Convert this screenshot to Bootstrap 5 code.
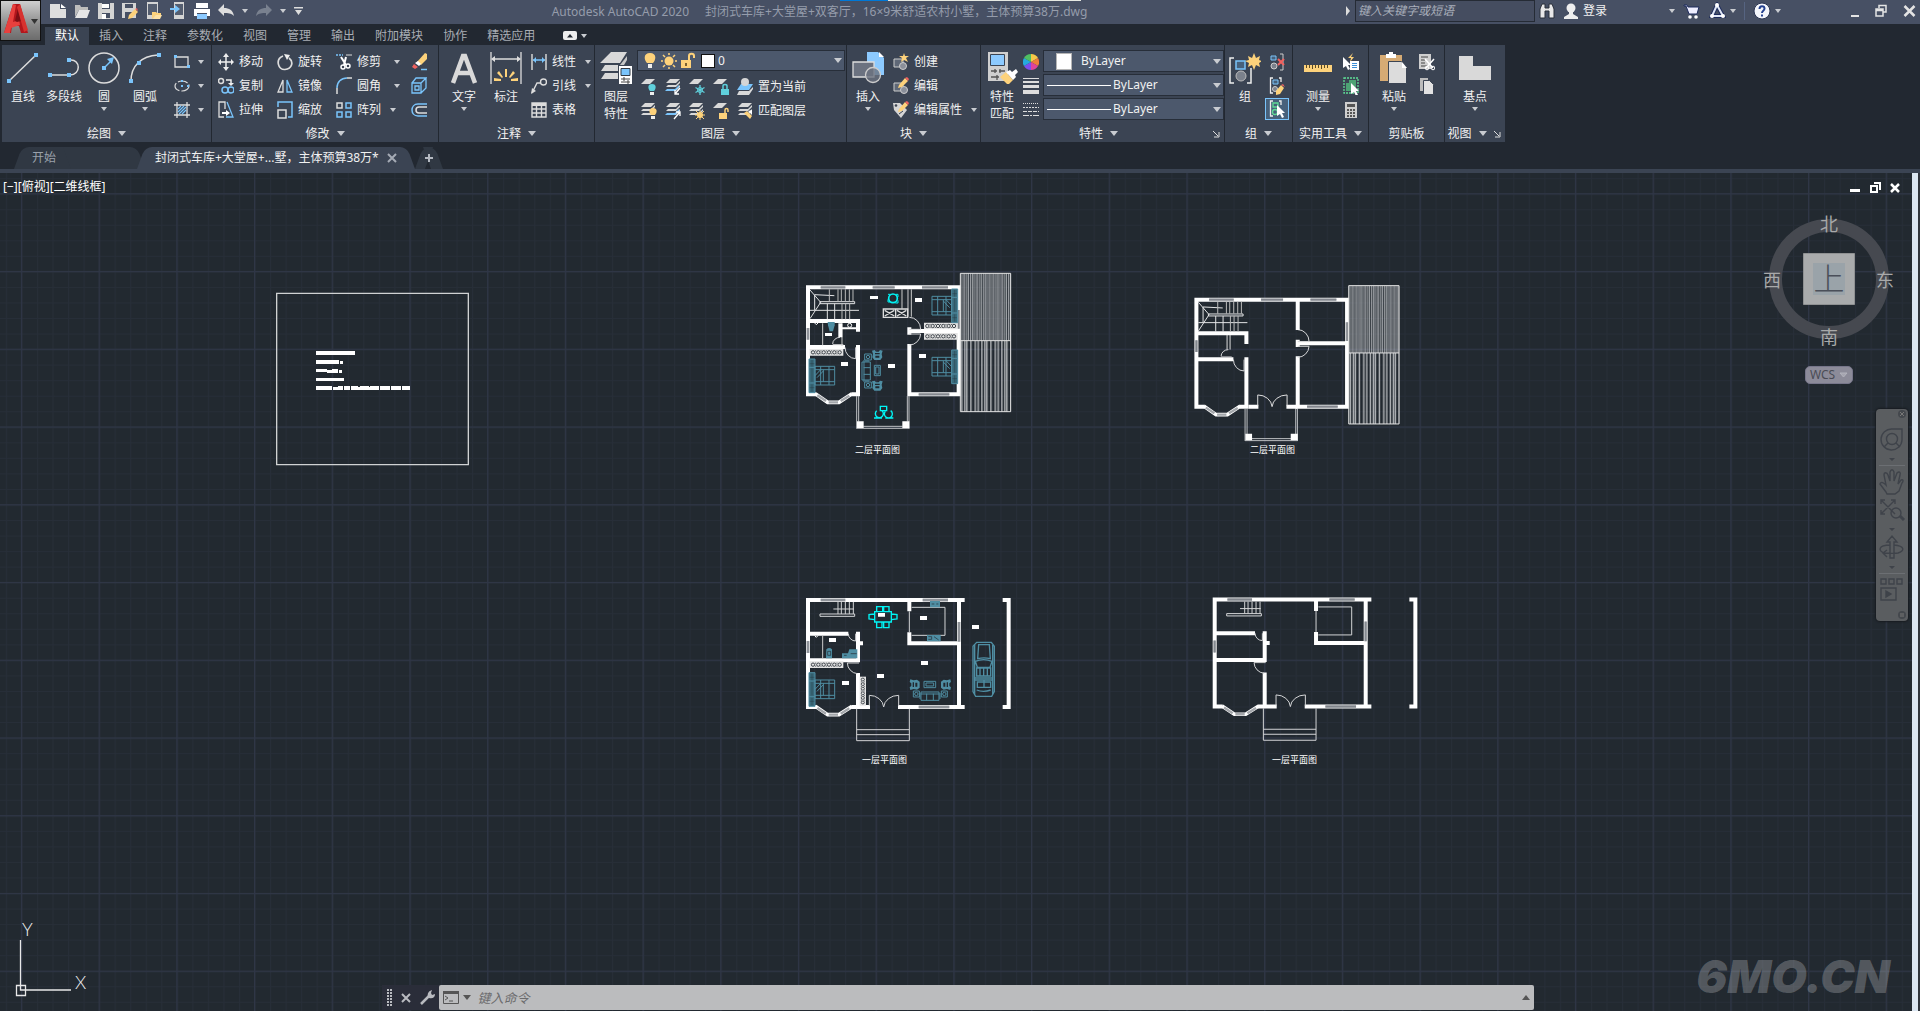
<!DOCTYPE html>
<html lang="zh-CN" data-bs-theme="dark">
<head>
<meta charset="utf-8">
<meta name="viewport" content="width=device-width, initial-scale=1">
<title>Autodesk AutoCAD 2020</title>
<link href="https://cdn.jsdelivr.net/npm/bootstrap@5.3.0/dist/css/bootstrap.min.css" rel="stylesheet">
<script src="https://cdn.jsdelivr.net/npm/bootstrap@5.3.0/dist/js/bootstrap.bundle.min.js"></script>
<style>
:root{--dark:#222831;--panel:#3b4453;--title:#475064;--field:#4c586c;--blue:#7ac4fb;--gold:#fdd27b}
body{font:12px/16px "Noto Sans","Noto Sans CJK SC",sans-serif;background:var(--dark);color:#f1f1f1}
button,input,select{font:inherit;color:inherit}
.flat{background:none;border:0;padding:0;display:flex;align-items:center;color:inherit}
svg{display:block;flex:none}
.i16{width:16px;height:18px}.i32{width:32px;height:32px}
.tri{width:0;height:0;border:3px solid transparent;border-top:4px solid #c9ccd1;border-bottom:0;flex:none}
.tri-l{border-width:4px;border-top-width:5px;border-bottom:0}
/* title bar */
.titlebar{height:24px;background:var(--title)}
.applogo{width:41px;height:41px;left:0;top:0;z-index:3;background:linear-gradient(#cfcfcf,#8b8b8b 60%,#6c6c6c);border:1px solid #111}
.qat{width:296px;padding:0 0 2px 50px;gap:8px}
.doc-title{color:#959cab}
.snap-a{left:840px;top:0;width:48px;height:1px;background:#0078d7}
.snap-b{left:888px;top:0;width:193px;height:1px;background:#e6e9e3}
.search{width:180px;height:22px;border:1px solid #252b35;background:#454d60;padding:0 0 2px 2px;font-style:italic;border-radius:0}
.search::placeholder{color:#a9afbb;opacity:1}
.info{width:577px;height:22px}
.account{width:92px;justify-content:space-between}
.tbsep{width:1px;height:18px;background:#566481}
/* ribbon */
.tabs{height:21px;padding:3px 0 0 45px}
.tabs button{padding:0 10px;height:18px;color:#a9adb4}
.tabs .on{background:var(--panel);color:#fff}
.ribbon{height:97px;gap:1px;padding-left:2px}
.pan{background:var(--panel);display:flex;flex-direction:column}
.pan-in{display:flex;padding-top:5px;height:78px}
.pan-ft{display:flex;height:19px;align-items:center;justify-content:center;gap:7px;padding-top:2px;position:relative}
.launch{position:absolute;right:4px;top:7px}
.big{flex-direction:column;width:42px;padding-top:2px;text-align:center;flex:none}
.big span{margin-top:4px;line-height:17px}
.big .tri{margin-top:2px}
.cmd{height:24px;gap:5px;white-space:nowrap}
.stack{display:flex;flex-direction:column;flex:none}
.w42{width:42px}.w40{width:40px}.w44{width:44px}.w59{width:59px}.w75{width:75px}
.w-draw{width:209px}.w-mod{width:226px}.w-ann{width:155px}.w-lay{width:251px}.w-blk{width:133px}
.w-prop{width:243px}.w-grp{width:67px}.w-util{width:75px}.w-clip{width:75px}.w-view{width:60px}
.in-mod{padding-left:6px}
.combo{height:22px;background:var(--field);border:1px solid #272e39;display:flex;align-items:center;position:relative;padding-right:2px}
.combo select{appearance:none;background:none;border:0;padding:0 0 0 5px;flex:1;min-width:0;outline:0}
.combo option{background:#3b4453}
.combo-lay{width:208px;padding-left:4px;gap:3px}
.combo-prop{width:181px;margin-bottom:2px}
.sw{background:#fff;border:1px solid #111;width:14px;height:14px;margin-left:2px}
.swl{background:#fff;border:1px solid #b5b5b5;width:16px;height:17px;margin:0 4px 0 12px}
.ln{width:64px;height:1px;background:#fff;margin:0 2px 0 3px}
.pick{width:24px;height:22px;border:1px solid var(--blue);background:#47617b;justify-content:center}
/* file tabs */
.files{height:27px;padding:5px 0 0 18px}
.ftab{position:relative;height:22px;display:flex;align-items:center;isolation:isolate;color:#9aa1ab;white-space:nowrap}
.ftab::before,.ftab::after{content:"";position:absolute;z-index:-1;top:0;bottom:0;background:#303843}
.ftab::before{left:0;right:50%;transform:skewX(-20deg);border-radius:7px 0 0 0}
.ftab::after{right:0;left:40%;transform:skewX(20deg);border-radius:0 7px 0 0}
.ftab.cur::before,.ftab.cur::after{background:var(--panel)}
.ftab.cur{color:#f1f1f1;width:270px;padding-left:14px}
.f-start{width:123px;padding-left:14px}
.f-add{width:20px;justify-content:center;margin-left:8px}
.strip{height:4px;background:var(--panel)}
/* canvas */
.stage{background:#222930;border-right:6px solid #dbe6f1;overflow:hidden}
.edge{width:2px;background:#30353c}
.vp-label{left:3px;top:6px;color:#fff}
.mdi{right:12px;top:9px;gap:9px}
.cube{right:17px;top:34px}
.wcs{right:59px;top:193px;width:48px;height:18px;background:#8c8b99;border:1px solid #77768a;border-radius:5px;color:#4a4b55;padding:0 4px;justify-content:space-between}
.navbar-v{right:4px;top:236px;width:32px;height:212px;background:#5a5d60;border-radius:4px;box-shadow:0 0 2px 1px #171b20}
.cmdline{left:20%;right:378px;bottom:1px;height:25px;background:#2a2d39}
.cmdtools{width:57px;gap:9px;padding-left:5px}
.cmdbox{background:#bbbcbe;border-radius:2px;color:#4b4b4b;padding:0 4px}
.cmdbox input{background:none;border:0;outline:0;font-style:italic;font-size:13px}
.cmdbox input::placeholder{color:#6b6b6d;opacity:1}
.wm{right:22px;bottom:13px;font:italic 900 46px/44px Inter,sans-serif;color:rgba(255,255,255,.23)}
.cad{position:absolute;inset:0;width:100%;height:100%}
.cad text{font-size:9px;fill:#fff;font-family:"Noto Sans CJK SC",sans-serif}
.ucs text{font:300 18px Lato,sans-serif;fill:#f0f0f0}
.cube text{font-size:18px;fill:#a8a9aa;font-family:"Noto Sans CJK SC",sans-serif;text-anchor:middle}
.cube .top-t{font-size:31px;font-weight:300;fill:#4b4f59}
</style>
</head>
<body class="vh-100 d-flex flex-column overflow-hidden">

<svg width="0" height="0" class="position-absolute" aria-hidden="true"><defs>
<g id="sheets"><path fill="#d9d9d9" d="M5 1h10l-4 4H1zM3 7h8l4-4v2l-4 4H1zM3 11h8l4-4v2l-4 4H1z"/></g>
<g id="sheet1"><path fill="#d9d9d9" d="M5 2h9l-5 5H0z"/></g>
<g id="bracket" fill="none" stroke="#eee" stroke-width="1.3"><path d="M4 1H1.500v15H4M10 1h2v4"/></g>
<g id="cur"><path fill="#fff" d="M0 0v11l3-2 2 4 2-1-2-4h3z"/></g>
<!-- furniture -->
<g id="bed" fill="none" stroke="#4f8ea3" stroke-width="3"><path fill="#39697a" d="M0 0h18v101H0zM0 25h18M0 72h18"/><path stroke="#222930" stroke-width="1" d="M2 14h14M9 3v20M2 86h14M9 76v22M9 28v40"/><path d="M18 22h59v56H18zM18 32h59M18 68h59M35 22v56M60 22v56M43 32v36M18 50l17-18M24 56l19-20"/></g>
<g id="ward"><path fill="#e4e4e4" d="M0 0h101v20H0z"/><path fill="none" stroke="#222930" stroke-width="2.500" d="M5 10a5 5 0 1 0 10 0a5 5 0 1 0-10 0M21 10a5 5 0 1 0 10 0a5 5 0 1 0-10 0M37 10a5 5 0 1 0 10 0a5 5 0 1 0-10 0M53 10a5 5 0 1 0 10 0a5 5 0 1 0-10 0M69 10a5 5 0 1 0 10 0a5 5 0 1 0-10 0M85 10a5 5 0 1 0 10 0a5 5 0 1 0-10 0M18 4v3M34 4v3M50 4v3M66 4v3M82 4v3M18 13v3M34 13v3M50 13v3M66 13v3M82 13v3"/></g>
<g id="arm" fill="#4f8ea3"><path d="M0 2l8-2 4 5h8l4-5 8 2-3 10 2 10-6 8H7l-6-8 2-10z"/><path fill="#222930" d="M9 9h14v4H9zM10 17h12v6H10z"/></g>
<g id="sofa" fill="none" stroke="#4f8ea3" stroke-width="3"><path d="M3 0h54v25H3zM0 4v18M60 4v18M20 0v20M40 0v20M3 19h54"/></g>
<!-- second-floor walls -->
<g id="f2" fill="none">
 <g stroke="#fff" stroke-width="12" ><path d="M78 82H542M84 76V409M536 76V409M78 403H108M214 403H240M382 403H542M84 183H240M234 177V215M234 255V409M84 261H195M388 252V409M382 213H536M388 202V224"/><path d="M106 401L143 427H177L216 401" stroke-width="11"/></g>
 <g stroke="#a3a6aa" stroke-width="9"><path d="M122 82H196M278 82H344M426 82H504M536 150V206M84 204V239M416 403H508"/><path stroke-width="7" d="M112 406L138 423M182 423L208 407M146 427H174"/></g>
 <g stroke="#6b7078" stroke-width="2"><path d="M122 82H196M278 82H344M426 82H504M536 150V206M84 204V239M416 403H508"/></g>
 <g stroke="#bfc1c4" stroke-width="3"><path d="M230 408V506M236 408V485M387 408V506M382 408V485M230 505H388M250 499H368"/></g>
 <path fill="#fff" d="M231 484h20v20h-20zM367 484h21v20h-21z"/>
 <g stroke="#d4d5d7" stroke-width="3"><path d="M388 172A34 36 0 0 1 422 208H388M388 255A34 35 0 0 0 422 222H388M195 262A32 34 0 0 0 227 296V262M158 252A22 20 0 0 1 180 232M158 254H190"/></g>
 <g stroke="#e3e4e5" stroke-width="3"><path d="M90 90L122 127L90 176M104 104L163 107M104 104V150M90 151H237M120 125H224V131H120zM142 131V178M164 131V178"/><path d="M174 88V124M184 88V124M196 88V124M208 88V124M219 88V124M148 88V124M186 131V178M197 131V178M209 131V178" stroke="#bbb"/></g>
 <path fill="url(#h1)" d="M541 40H692V242H541z"/><path fill="url(#h2)" d="M541 242H692V455H541z"/>
 <path stroke="#e3e3e3" stroke-width="3" d="M541 40H692V455H541zM541 242H692"/>
</g>
<pattern id="h1" width="38" height="10" patternUnits="userSpaceOnUse" x="541"><path stroke="#dfe0e2" stroke-width="2" d="M3 0V10M9 0V10M14 0V10M20 0V10M25 0V10M31 0V10M36 0V10"/></pattern>
<pattern id="h2" width="60" height="10" patternUnits="userSpaceOnUse" x="541"><path stroke="#f0f1f2" stroke-width="3" d="M5 0V10M14 0V10M20 0V10M32 0V10M45 0V10M54 0V10"/></pattern>
<!-- ground-floor walls -->
<g id="f1" fill="none">
 <g stroke="#fff" stroke-width="12"><path d="M78 60H554M84 54V387M537 54V387M78 381H108M214 381H270M354 381H554M388 60V94M388 157V196M382 190H537M84 161H205M234 155V247M234 190H249M84 241H240M234 279V387M668 60H692M686 54V387M668 381H692"/><path stroke-width="11" d="M106 379L143 404H177L216 379"/></g>
 <g stroke="#a3a6aa" stroke-width="9"><path d="M122 60H196M428 60H504M537 126V185M84 183V219M416 381H508"/><path stroke-width="7" d="M112 384L138 401M182 401L208 385M146 404H174"/></g>
 <g stroke="#6b7078" stroke-width="2"><path d="M122 60H196M428 60H504M537 126V185M84 183V219M416 381H508"/></g>
 <g stroke="#d4d5d7" stroke-width="3"><path d="M230 386V482H388V386M230 449H388M230 464H388M395 82H495V166H395M388 94V157"/><path d="M205 161A22 22 0 0 0 227 183V161M237 249H202A33 33 0 0 0 232 281M268 378V346A43 38 0 0 1 311 381A45 38 0 0 1 356 346V378"/><path d="M174 66V102M184 66V102M196 66V102M208 66V102M220 66V102M160 87H222M120 102H224V109H120z"/></g>
</g>
</defs></svg>

<header class="titlebar d-flex position-relative flex-shrink-0">
 <span class="snap-a position-absolute"></span><span class="snap-b position-absolute"></span>
 <button class="flat applogo position-absolute" aria-label="应用程序菜单"><svg width="39" height="39" viewBox="0 0 39 39"><path fill="#b3161c" d="M3 32L12 3h7l8 29h-7l-2-7h-7l-1 7z"/><path fill="#e8403d" d="M3 32L12 3l3 1-3 17 6-2 1 5-9 3-1 5z"/><path fill="#7d0f14" d="M17 7l3 13-4 1-2-1z"/><path fill="#d8322f" d="M19 3l8 26-4 2-7-25z"/><path fill="#333" d="M30 18h7l-3.500 5z"/></svg></button>
 <nav class="qat d-flex align-items-center flex-shrink-0" aria-label="快速访问">
  <button class="flat" aria-label="新建"><svg class="i16"><path fill="#dedede" d="M0 2h10v5h6v9H0z"/><path fill="#fff" d="M11 2l5 4h-5z"/></svg></button>
  <button class="flat" aria-label="打开"><svg class="i16"><path fill="#bdbdbd" d="M1 3h5l1 2h7v3H5l-4 7z"/><path fill="#e6e6e6" d="M5 8h11l-3 8H1z"/></svg></button>
  <button class="flat" aria-label="保存"><svg class="i16"><path fill="#d4d4d4" d="M0 1h16v16H0z"/><path fill="#475064" d="M4 1h8v6H4zM4 11h8v5H4z"/><path fill="#fff" d="M4 2h7v4H4zM4 12h4v5H4z"/></svg></button>
  <button class="flat" aria-label="另存为"><svg class="i16"><path fill="#d4d4d4" d="M0 1h14v15H0z"/><path fill="#475064" d="M3 2h8v4H3zM3 10h7v6H3z"/><path fill="#fdd27b" d="M7 13l6-6 3 3-6 6-4 1z"/><path fill="#f0625f" d="M13 7l2-1 1 3z"/></svg></button>
  <button class="flat" aria-label="从移动设备打开"><svg class="i16"><path fill="#d4d4d4" d="M1 0h11v17H1z"/><path fill="#555e70" d="M2 2h9v11H2z"/><path fill="#fdd27b" d="M6 10h4l1 1h4v2h-5l-4 4z"/><path fill="#ffe2a5" d="M10 13h6l-2 4H7z"/></svg></button>
  <button class="flat" aria-label="保存到移动设备"><svg class="i16"><path fill="#d4d4d4" d="M4 0h10v17H4z"/><path fill="#555e70" d="M5 2h8v11H5z"/><path fill="#7ac4fb" d="M0 6h5V3l5 4-5 4V8H0z"/></svg></button>
  <button class="flat" aria-label="打印"><svg class="i16"><path fill="#fff" d="M2 1h12v5H2zM0 7h16v7h-3v-3H3v3H0z"/><path fill="#8ccaff" d="M3 12h10v5H3z"/><path stroke="#475064" d="M0 6.500h16"/></svg></button>
  <button class="flat" aria-label="放弃"><svg class="i16"><path fill="#dedede" d="M6 2v4c5 0 9 2 10 8-3-3-6-3-10-3v3L0 8z"/></svg></button>
  <span class="tri"></span>
  <button class="flat" aria-label="重做"><svg class="i16"><path fill="#79818f" d="M10 2v4c-5 0-9 2-10 8 3-3 6-3 10-3v3l6-6z"/></svg></button>
  <span class="tri"></span>
  <button class="flat" aria-label="自定义"><svg width="9" height="10"><path fill="#ddd" d="M0 1h9v1.500H0zM1 4h7l-3.500 5z"/></svg></button>
 </nav>
 <div class="doc-title flex-grow-1 text-center text-nowrap align-self-center overflow-hidden"><span class="me-3">Autodesk AutoCAD 2020</span><span>封闭式车库+大堂屋+双客厅，16×9米舒适农村小墅，主体预算38万.dwg</span></div>
 <div class="info d-flex align-items-center flex-shrink-0">
  <svg width="12" height="10" aria-hidden="true"><path fill="#ddd" d="M3 0l4 5-4 5z"/></svg>
  <input class="search" type="text" placeholder="键入关键字或短语" aria-label="搜索">
  <button class="flat ms-1 me-2" aria-label="搜索"><svg width="16" height="18"><path fill="#e8e8e8" stroke="#2b303b" d="M1 16V7l2-5h3v4h4V2h3l2 5v9h-5V9H6v7z"/></svg></button>
  <button class="flat me-1" aria-label="账户"><svg width="16" height="18"><circle cx="8" cy="6" r="4.500" fill="#eee"/><path fill="#eee" d="M6 9h4v3l5 3v2H1v-2l5-3z"/></svg></button>
  <button class="flat account"><span>登录</span><span class="tri"></span></button>
  <button class="flat ms-2" aria-label="应用商店"><svg width="18" height="18"><path fill="#eef" stroke="#1d2b5c" d="M1 3h3l1 2h11l-2 7H6L3 4H1z"/><circle cx="7" cy="15" r="1.800" fill="#fff"/><circle cx="13" cy="15" r="1.800" fill="#fff"/></svg></button>
  <button class="flat ms-2" aria-label="Autodesk"><svg width="17" height="18"><path fill="none" stroke="#1d2b5c" stroke-width="4" d="M8 3L3 14h11z"/><path fill="none" stroke="#dfe6f5" stroke-width="2" d="M8 3L3 14h11z"/><circle cx="8" cy="3" r="2" fill="#fff"/><circle cx="3" cy="14" r="2" fill="#fff"/><circle cx="14" cy="14" r="2" fill="#fff"/></svg></button>
  <span class="tri ms-1 me-2"></span><span class="tbsep me-2"></span>
  <button class="flat" aria-label="帮助"><svg width="18" height="18"><circle cx="9" cy="9" r="8" fill="#f4f6fb" stroke="#2b3552"/><path fill="none" stroke="#24418f" stroke-width="2" d="M6.500 7c0-4 5-3.500 5-.5C11.500 9 9 8.500 9 11M9 12.500v2"/></svg></button>
  <span class="tri ms-1"></span>
  <div class="d-flex ms-auto gap-3 me-1 align-items-center" >
   <button class="flat" aria-label="最小化"><svg width="8" height="14"><path fill="#e4e4e4" d="M0 11h8v2H0z"/></svg></button>
   <button class="flat" aria-label="还原"><svg width="12" height="14"><path fill="none" stroke="#e4e4e4" stroke-width="1.500" d="M4 4V1.500h7V8H8M1 5h7v7H1zM1 6.500h7"/></svg></button>
   <button class="flat" aria-label="关闭"><svg width="13" height="14"><path stroke="#e4e4e4" stroke-width="2.500" d="M1.500 2l10 10M11.500 2l-10 10"/></svg></button>
  </div>
 </div>
</header>

<nav class="tabs d-flex flex-shrink-0" aria-label="功能区选项卡">
 <button class="flat on">默认</button><button class="flat">插入</button><button class="flat">注释</button><button class="flat">参数化</button><button class="flat">视图</button><button class="flat">管理</button><button class="flat">输出</button><button class="flat">附加模块</button><button class="flat">协作</button><button class="flat">精选应用</button>
 <button class="flat ms-2 gap-1" aria-label="最小化功能区"><svg width="14" height="10"><rect width="14" height="9" rx="2" fill="#eee"/><path fill="#222831" d="M4 6.500l3-3.500 3 3.500z"/></svg><span class="tri"></span></button>
</nav>

<section class="ribbon d-flex flex-shrink-0">
 <div class="pan w-draw">
  <div class="pan-in">
   <button class="flat big w42"><svg class="i32"><path stroke="#ddd" stroke-width="1.500" d="M2 29L29 3"/><path fill="#7ac4fb" d="M0 27h4v4H0zM27 1h4v4h-4z"/></svg><span>直线</span></button>
   <button class="flat big w40"><svg class="i32"><path fill="none" stroke="#ddd" stroke-width="1.500" d="M2 23h20c11 0 11-16 0-15"/><path fill="#7ac4fb" d="M0 21h4v4H0zM19 21h4v4h-4zM19 6h4v4h-4z"/></svg><span>多段线</span></button>
   <button class="flat big w40"><svg class="i32"><circle cx="16" cy="16" r="15" fill="none" stroke="#ddd" stroke-width="1.500"/><path stroke="#7ac4fb" stroke-width="1.500" d="M16 16l7-7"/><path fill="#7ac4fb" d="M14 14h4v4h-4zM26 5l-2 7-5-5z"/></svg><span>圆</span><i class="tri"></i></button>
   <button class="flat big w42"><svg class="i32"><path fill="none" stroke="#ddd" stroke-width="1.500" d="M2 29C2 14 12 4 29 3"/><path fill="#7ac4fb" d="M0 27h4v4H0zM8 9h4v4H8zM28 1h4v4h-4z"/></svg><span>圆弧</span><i class="tri"></i></button>
   <div class="stack ps-1">
    <button class="flat cmd ps-1 gap-2" aria-label="矩形"><svg class="i16"><path fill="none" stroke="#ddd" stroke-width="1.300" d="M1 4h13v10H1z"/><path fill="#7ac4fb" d="M0 2h3v3H0zM13 12h3v3h-3z"/></svg><i class="tri"></i></button>
    <button class="flat cmd ps-1 gap-2" aria-label="椭圆"><svg class="i16"><ellipse cx="8" cy="9" rx="7" ry="5" fill="none" stroke="#ddd" stroke-width="1.200" stroke-dasharray="10 2"/><path fill="#7ac4fb" d="M7 3h2v2H7zM7 8h2v2H7zM13 8h2v2h-2z"/></svg><i class="tri"></i></button>
    <button class="flat cmd ps-1 gap-2" aria-label="图案填充"><svg class="i16"><path fill="none" stroke="#ddd" stroke-width="1.300" d="M0 4h16M0 14h16M3 1v16M13 1v16"/><path stroke="#7ac4fb" stroke-width="1.200" d="M4 8l3-3M4 11l6-6M5 13l7-7M8 13l4-4"/></svg><i class="tri"></i></button>
   </div>
  </div><div class="pan-ft">绘图 <i class="tri tri-l"></i></div>
 </div>

 <div class="pan w-mod">
  <div class="pan-in in-mod">
   <div class="stack w59">
    <button class="flat cmd"><svg class="i16"><path stroke="#eee" stroke-width="1.500" d="M8 3v12M2 9h12"/><path fill="#eee" d="M5 4l3-4 3 4zM5 14l3 4 3-4zM3 6v6L0 9zM13 6v6l3-3z"/></svg>移动</button>
    <button class="flat cmd"><svg class="i16"><g fill="none" stroke-width="1.500"><circle cx="3" cy="4" r="2.500" stroke="#ddd"/><path stroke="#eee" d="M8 3h5v4"/><circle cx="7" cy="13" r="3" stroke="#7ac4fb"/><circle cx="13" cy="13" r="3" stroke="#7ac4fb"/></g><path fill="#eee" d="M10 6h6l-3 3z"/></svg>复制</button>
    <button class="flat cmd"><svg class="i16"><path fill="none" stroke="#ddd" stroke-width="1.300" d="M7 8V1H1v15h5"/><path fill="none" stroke="#7ac4fb" stroke-width="1.300" d="M9 1l6 15H8"/><path fill="#fff" d="M4 11h4V9l4 3-4 3v-2H4z"/></svg>拉伸</button>
   </div>
   <div class="stack w59">
    <button class="flat cmd"><svg class="i16"><path fill="none" stroke="#ddd" stroke-width="1.700" d="M6 3C-2 6 1 17 8 16.500 15 16 17 9 12 5"/><path fill="#eee" d="M7 1l6 1-3 5z"/></svg>旋转</button>
    <button class="flat cmd"><svg class="i16"><path fill="none" stroke="#ddd" stroke-width="1.300" d="M6 3v12H1z"/><path fill="none" stroke="#7ac4fb" stroke-width="1.300" d="M10 3v12h5z"/></svg>镜像</button>
    <button class="flat cmd"><svg class="i16"><path fill="none" stroke="#7ac4fb" stroke-width="1.500" d="M1 6V1h14v15h-4"/><path fill="none" stroke="#ddd" stroke-width="1.500" d="M1 9h8v8H1z"/></svg>缩放</button>
   </div>
   <div class="stack w75">
    <button class="flat cmd"><svg class="i16"><path stroke="#7ac4fb" stroke-width="1.500" stroke-dasharray="2 1" d="M0 2h7"/><path stroke="#ddd" d="M10 2h6"/><path stroke="#fff" stroke-width="2" d="M5 4l5 8M10 4l-2 8"/><circle cx="7" cy="14" r="2" fill="none" stroke="#fff" stroke-width="1.500"/><circle cx="12" cy="13" r="2" fill="none" stroke="#fff" stroke-width="1.500"/></svg>修剪<i class="tri ms-2"></i></button>
    <button class="flat cmd"><svg class="i16"><path fill="none" stroke="#7ac4fb" stroke-width="1.500" d="M1 11C1 5 5 1 11 1"/><path stroke="#ddd" stroke-width="1.500" d="M1 11v6M11 1h5"/></svg>圆角<i class="tri ms-2"></i></button>
    <button class="flat cmd"><svg class="i16"><g fill="none" stroke-width="1.500"><path stroke="#ddd" d="M1 2h5v5H1z"/><path stroke="#7ac4fb" d="M10 2h5v5h-5zM1 11h5v5H1zM10 11h5v5h-5z"/></g></svg>阵列<i class="tri ms-1"></i></button>
   </div>
   <div class="stack">
    <button class="flat cmd" aria-label="删除"><svg class="i16"><path fill="#fdd27b" d="M6 9l8-9 2 1v5l-6 6z"/><path fill="#fff" d="M4 10l4 3 2-2-3-3z"/><path fill="#f0625f" d="M3 11l4 3-3 2-3-2z"/><path stroke="#7ac4fb" stroke-width="1.500" d="M10 16.500h6"/></svg></button>
    <button class="flat cmd" aria-label="分解"><svg class="i16"><path fill="none" stroke="#7ac4fb" stroke-width="1.300" d="M1 6h9v10H1zM1 6l4-5h10l-5 5M15 1v10l-5 5M4 9h4v4H4z"/></svg></button>
    <button class="flat cmd" aria-label="偏移"><svg class="i16"><path fill="none" stroke="#ddd" stroke-width="1.500" d="M16 6H8C4 6 4 12 8 12h8"/><path fill="none" stroke="#7ac4fb" stroke-width="1.500" d="M16 3H7C-1 3-1 15 7 15h9"/></svg></button>
   </div>
  </div><div class="pan-ft">修改 <i class="tri tri-l"></i></div>
 </div>

 <div class="pan w-ann">
  <div class="pan-in ps-1">
   <button class="flat big"><svg class="i32"><path fill="none" stroke="#d9d9d9" stroke-width="4.500" d="M5 31L15 4h2l10 27M9 21h14"/></svg><span>文字</span><i class="tri"></i></button>
   <button class="flat big"><svg class="i32"><path stroke="#ddd" stroke-width="1.300" d="M1 0v32M31 0v32M3 7h26"/><path fill="#ddd" d="M1 7l4-3v6zM31 7l-4-3v6z"/><path fill="#fdd27b" d="M15 17h2v8h-2zM9 19l4 6-1 1-5-5zM23 19l-4 6 1 1 5-5zM4 26l7 1v2H4zM28 26l-7 1v2h7z"/></svg><span>标注</span></button>
   <div class="stack ps-1">
    <button class="flat cmd"><svg class="i16"><path stroke="#ddd" stroke-width="1.400" d="M1 1v16M15 1v16"/><path stroke="#7ac4fb" stroke-width="1.500" d="M2 7h12"/><path fill="#7ac4fb" d="M2 7l3-3v6zM14 7l-3-3v6z"/></svg>线性<i class="tri ms-1"></i></button>
    <button class="flat cmd"><svg class="i16"><path fill="none" stroke="#ddd" stroke-width="1.400" d="M1 16L6 6h4"/><circle cx="12.500" cy="5" r="3" fill="none" stroke="#ddd" stroke-width="1.400"/><path fill="#ddd" d="M0 17l1-6 4 3z"/></svg>引线<i class="tri ms-1"></i></button>
    <button class="flat cmd"><svg class="i16"><path fill="none" stroke="#ddd" stroke-width="1.400" d="M1 2h14v14H1zM1 8h14M1 12h14M5.500 5v11M10.500 5v11"/><path fill="#ddd" d="M1 2h14v3H1z"/></svg>表格</button>
   </div>
  </div><div class="pan-ft">注释 <i class="tri tri-l"></i></div>
 </div>

 <div class="pan w-lay">
  <div class="pan-in">
   <button class="flat big"><svg class="i32"><path fill="#d9d9d9" d="M11 0h16l-7 11H0zM5 13h13v6H1zM5 21h13v6H1z"/><path fill="#c7c7c7" d="M27 4v4l-3 5h-4z"/><path fill="#fff" d="M19 14h13v18H19z"/><path fill="#7ac4fb" stroke="#333a45" d="M21 16.500h9v7h-9z"/><path stroke="#444" d="M21 27h9M21 30h9M24 25v4M28 28v4"/></svg><span>图层<br>特性</span></button>
   <div class="stack">
    <div class="combo combo-lay mb-1">
     <svg class="i16"><path fill="#fdd27b" d="M8 1c7 0 6 7 3 10H5C2 8 1 1 8 1z"/><path fill="#eee" d="M6 12h4v4H6z"/></svg>
     <svg class="i16"><circle cx="8" cy="9" r="4.500" fill="#fdd27b"/><path stroke="#fdd27b" stroke-width="1.500" d="M8 1v2M8 15v2M0 9h2M14 9h2M2 3l2 2M12 13l2 2M14 3l-2 2M4 13l-2 2"/></svg>
     <svg class="i16"><path fill="#fdd27b" d="M1 8h10v8H1z"/><path fill="none" stroke="#fdd27b" stroke-width="2" d="M9 8V4c0-3 5-3 5 0v2"/><path fill="#7b6130" d="M5 11h2v3H5z"/></svg>
     <span class="sw"></span><select class="ps-0" aria-label="图层"><option>0</option></select><i class="tri tri-l"></i></div>
    <div class="d-flex ps-1 gap-2">
     <button class="flat cmd" aria-label="关闭图层"><svg class="i16"><use href="#sheet1" transform="translate(0 -1)"/><path fill="#5fd0dc" d="M11 6c5 0 4 5 2 7h-4c-2-2-3-7 2-7z"/><path fill="#eee" d="M9 14h4v3H9z"/></svg></button>
     <button class="flat cmd" aria-label="隔离"><svg class="i16"><use href="#sheets"/><path fill="#7ac4fb" d="M2 11h8l4-4v2l-4 4H0z"/><path stroke="#fff" stroke-width="1.300" fill="none" d="M15 10l-5 6M10 12v4h4"/></svg></button>
     <button class="flat cmd" aria-label="冻结"><svg class="i16"><use href="#sheet1" transform="translate(0 -1)"/><path stroke="#5fd0dc" stroke-width="1.300" d="M11 7v10M6.500 9.500l9 5M6.500 14.500l9-5"/><circle cx="11" cy="12" r="2.500" fill="none" stroke="#5fd0dc"/></svg></button>
     <button class="flat cmd" aria-label="锁定"><svg class="i16"><use href="#sheet1" transform="translate(0 -1)"/><path fill="#5fd0dc" d="M8 11h8v6H8z"/><path fill="none" stroke="#5fd0dc" stroke-width="1.500" d="M10 11V8c0-2 4-2 4 0v3"/></svg></button>
     <button class="flat cmd"><svg class="i16"><path fill="#d9d9d9" d="M2 13h10l4-4v2l-4 6H0z"/><path fill="#7ac4fb" d="M4 6h12l-4 6H0z"/><circle cx="8" cy="4" r="4" fill="#d5d5d5"/></svg>置为当前</button>
    </div>
    <div class="d-flex ps-1 gap-2">
     <button class="flat cmd" aria-label="打开所有图层"><svg class="i16"><use href="#sheets" transform="translate(-1 0)"/><path fill="#fdd27b" d="M12 6c5 0 4 5 2 7h-4c-2-2-3-7 2-7z"/><path fill="#eee" d="M10 14h4v3h-4z"/></svg></button>
     <button class="flat cmd" aria-label="取消隔离"><svg class="i16"><use href="#sheets"/><path fill="#7ac4fb" d="M2 11h8l4-4v2l-4 4H0z"/><path fill="none" stroke="#fff" stroke-width="1.300" d="M9 17l6-7M11 10h4v4"/></svg></button>
     <button class="flat cmd" aria-label="解冻"><svg class="i16"><use href="#sheets" transform="translate(-1 0)"/><circle cx="11" cy="13" r="3" fill="#fdd27b"/><path stroke="#fdd27b" d="M11 8v10M6 13h10M7 9l8 8M15 9l-8 8"/></svg></button>
     <button class="flat cmd" aria-label="解锁"><svg class="i16"><use href="#sheet1" transform="translate(0 -1)"/><path fill="#fdd27b" d="M6 11h8v6H6z"/><path fill="none" stroke="#fdd27b" stroke-width="1.500" d="M12 11V8c0-2 3-2 3 0v2"/></svg></button>
     <button class="flat cmd"><svg class="i16"><use href="#sheets"/><path fill="#fdd27b" d="M7 11l3-2 5 5-2 3z"/><path fill="#fff" d="M11 9l4-1v5z"/></svg>匹配图层</button>
    </div>
   </div>
  </div><div class="pan-ft">图层 <i class="tri tri-l"></i></div>
 </div>

 <div class="pan w-blk">
  <div class="pan-in">
   <button class="flat big"><svg class="i32"><path fill="#8ccaff" d="M15 0h11l6 6v17H15z"/><path fill="#fff" d="M27 0l5 5h-5z"/><path fill="#6b7280" stroke="#ddd" stroke-width="1.300" d="M1 10h21v15H1z"/><circle cx="21" cy="23" r="7.500" fill="#6b7280" fill-opacity=".8" stroke="#ccc" stroke-width="1.300"/></svg><span>插入</span><i class="tri"></i></button>
   <div class="stack ps-1">
    <button class="flat cmd"><svg class="i16"><path fill="#5f6877" stroke="#ccc" d="M1 6h9v8H1z"/><circle cx="10" cy="13" r="3.500" fill="#8b909a" stroke="#ccc"/><path fill="#fdd27b" d="M11 0l1 3h4l-3 2 2 4-4-2-3 2 1-4-3-2h4z"/></svg>创建</button>
    <button class="flat cmd"><svg class="i16"><path fill="#5f6877" stroke="#ccc" d="M1 6h9v8H1z"/><circle cx="11" cy="13" r="3.500" fill="#8b909a" stroke="#ccc"/><path fill="#fdd27b" d="M6 8l6-7 3 3-6 6-4 1z"/><path fill="#f0625f" d="M12 1l2-1 2 2-1 2z"/></svg>编辑</button>
    <button class="flat cmd"><svg class="i16"><path fill="#d5d5d5" d="M0 2h7l7 7-6 8L1 9z"/><circle cx="3" cy="4.500" r="1.300" fill="#3b4453"/><path fill="#fdd27b" d="M6 8l6-7 3 3-6 6-4 1z"/><path fill="#f0625f" d="M12 1l2-1 2 2-1 2z"/><path stroke="#3b4453" d="M6 13l4-3"/></svg>编辑属性<i class="tri ms-1"></i></button>
   </div>
  </div><div class="pan-ft">块 <i class="tri tri-l"></i></div>
 </div>

 <div class="pan w-prop">
  <div class="pan-in">
   <button class="flat big"><svg class="i32"><path fill="#cfcfcf" d="M2 0h20v29H2z"/><path fill="#8ccaff" stroke="#3b4453" d="M4.500 2.500h14v11h-14z"/><path stroke="#555" stroke-width="1.300" d="M5 19h6M13 19h6M5 25h8M9 17v4M14 17v4M11 23v5"/><path fill="#fdd27b" d="M14 25l6-5 7 8-5 5z"/><path fill="#fff" d="M20 20l4-2 2 2 4-3 2 3-3 3 1 2-3 3z"/></svg><span>特性<br>匹配</span></button>
   <div class="stack pe-1">
    <button class="flat cmd" aria-label="对象颜色"><svg width="16" height="18"><g transform="translate(8 9)"><path fill="#f7c948" d="M0 0V-8A8 8 0 0 1 7-4z"/><path fill="#ef7d3a" d="M0 0L7-4A8 8 0 0 1 7 4z"/><path fill="#e0439a" d="M0 0L7 4A8 8 0 0 1 0 8z"/><path fill="#7a4ff0" d="M0 0V8A8 8 0 0 1-7 4z"/><path fill="#26a9e0" d="M0 0L-7 4A8 8 0 0 1-7-4z"/><path fill="#4fbf62" d="M0 0L-7-4A8 8 0 0 1 0-8z"/></g></svg></button>
    <button class="flat cmd" aria-label="线宽"><svg class="i16"><path fill="#ddd" d="M0 1h16v1H0zM0 4h16v2H0zM0 8h16v3H0zM0 13h16v4H0z"/></svg></button>
    <button class="flat cmd" aria-label="线型"><svg class="i16"><g stroke="#ddd"><path stroke-dasharray="1 1" d="M0 2.500h16"/><path stroke-dasharray="2 1" d="M0 6.500h16"/><path stroke-dasharray="4 1" d="M0 10.500h16"/><path stroke-dasharray="6 1 2 1" d="M0 14.500h16"/></g></svg></button>
   </div>
   <div class="stack">
    <div class="combo combo-prop"><span class="swl"></span><select aria-label="颜色"><option>ByLayer</option></select><i class="tri tri-l"></i></div>
    <div class="combo combo-prop"><span class="ln"></span><select class="ps-0" aria-label="线宽"><option>ByLayer</option></select><i class="tri tri-l"></i></div>
    <div class="combo combo-prop"><span class="ln"></span><select class="ps-0" aria-label="线型"><option>ByLayer</option></select><i class="tri tri-l"></i></div>
   </div>
  </div><div class="pan-ft pe-2">特性 <i class="tri tri-l"></i><svg class="launch" width="8" height="8"><path fill="none" stroke="#ddd" d="M1 1l5 5M7 2v5H2"/></svg></div>
 </div>

 <div class="pan w-grp">
  <div class="pan-in">
   <button class="flat big w40"><svg class="i32"><path fill="none" stroke="#eee" stroke-width="1.500" d="M5 6H1v25h4M18 31h4V16"/><path fill="#47617b" stroke="#7ac4fb" stroke-width="1.500" d="M7 9h9v8H7z"/><circle cx="12" cy="24" r="5" fill="#7b818c" stroke="#bbb"/><path fill="#fdd27b" d="M25 1l2 5 4-2-1 4 3 1-3 2 1 4-4-2-2 5-2-5-4 2 1-4-4-2 4-1-1-4 4 2z"/></svg><span>组</span></button>
   <div class="stack align-items-center">
    <button class="flat cmd" aria-label="解除编组"><svg class="i16"><path fill="none" stroke="#ccc" d="M11 1h3v16h-3"/><path fill="#47617b" stroke="#7ac4fb" d="M2 3h5v4H2z"/><circle cx="5" cy="13" r="3" fill="#7b818c" stroke="#ccc"/><path stroke="#f0625f" stroke-width="2" d="M9 6l6 6M15 6l-6 6"/></svg></button>
    <button class="flat cmd" aria-label="组编辑"><svg class="i16"><use href="#bracket"/><path fill="#47617b" stroke="#7ac4fb" d="M4 3h5v4H4z"/><circle cx="6" cy="12" r="2.500" fill="#7b818c" stroke="#ccc"/><path fill="#fdd27b" d="M7 14l5-6 3 3-4 6-4 1z"/><path fill="#f0625f" d="M12 8l2-1 2 3z"/></svg></button>
    <button class="flat pick" aria-label="启用组选择"><svg class="i16"><use href="#bracket"/><path fill="none" stroke="#5fdc96" stroke-width="1.300" d="M4 3h5v4H4z"/><circle cx="6" cy="12" r="2.500" fill="none" stroke="#5fdc96" stroke-width="1.300"/><use href="#cur" x="8" y="5"/></svg></button>
   </div>
  </div><div class="pan-ft">组 <i class="tri tri-l"></i></div>
 </div>

 <div class="pan w-util">
  <div class="pan-in ps-1">
   <button class="flat big"><svg class="i32"><path fill="#fdd27b" d="M2 13h28v7H2z"/><path stroke="#5a4a25" d="M4.500 13v3M7.500 13v3M10.500 13v4M13.500 13v3M16.500 13v3M19.500 13v4M22.500 13v3M25.500 13v3"/></svg><span>测量</span><i class="tri"></i></button>
   <div class="stack ps-1">
    <button class="flat cmd" aria-label="快速选择"><svg class="i16"><path fill="#fdd27b" d="M10 0L5 5h3l-1 4 4-5H8z"/><use href="#cur" y="4"/><path fill="#fff" d="M7 8h9v9H7z"/><path stroke="#3b8fd8" d="M9 10.500h5M9 12.500h5M9 14.500h5"/></svg></button>
    <button class="flat cmd" aria-label="全部选择"><svg class="i16"><path fill="none" stroke="#5fdc96" stroke-width="1.300" stroke-dasharray="2 1" d="M1 1h14v15H1z"/><path fill="#4da374" d="M3 6h3V3h7v8H8v3H3z"/><use href="#cur" x="8" y="6"/></svg></button>
    <button class="flat cmd" aria-label="快速计算器"><svg class="i16"><path fill="#cfcfcf" d="M2 1h12v16H2z"/><path fill="#555" d="M4 3h8v3H4zM4 8h2v2H4zM7 8h2v2H7zM10 8h2v2h-2zM4 11h2v2H4zM7 11h2v2H7zM10 11h2v2h-2zM4 14h2v2H4zM7 14h2v2H7zM10 14h2v2h-2z"/></svg></button>
   </div>
  </div><div class="pan-ft">实用工具 <i class="tri tri-l"></i></div>
 </div>

 <div class="pan w-clip">
  <div class="pan-in ps-1">
   <button class="flat big"><svg class="i32"><path fill="#d6ab74" d="M2 3h22v26H2z"/><path fill="#fff" d="M8 2h3V0h4v2h3v4H8z"/><path fill="#dcdcdc" stroke="#3b4453" d="M10.500 9.500h13l5 6v16h-18z"/><path fill="#fff" d="M24 10l5 6h-5z"/></svg><span>粘贴</span><i class="tri"></i></button>
   <div class="stack ps-1">
    <button class="flat cmd" aria-label="剪切"><svg class="i16"><path fill="#cfcfcf" d="M0 1h12v15H0z"/><path stroke="#444" d="M2 4h7M2 7h4M2 10h4M2 13h7"/><path stroke="#fff" stroke-width="1.500" d="M6 6l8 9M15 6l-8 9"/><circle cx="8" cy="15" r="1.800" fill="none" stroke="#fff"/><circle cx="14" cy="15" r="1.800" fill="none" stroke="#fff"/></svg></button>
    <button class="flat cmd" aria-label="复制剪裁"><svg class="i16"><path fill="#bbb" d="M1 1h8v3H4v10H1z"/><path fill="#e2e2e2" stroke="#3b4453" d="M4.500 3.500h6l4 4v10h-10z"/></svg></button>
   </div>
  </div><div class="pan-ft">剪贴板</div>
 </div>

 <div class="pan w-view">
  <div class="pan-in justify-content-center">
   <button class="flat big"><svg class="i32"><path fill="#d9d9d9" d="M0 4h14v10h18v14H0z"/></svg><span>基点</span><i class="tri"></i></button>
  </div><div class="pan-ft pe-3">视图 <i class="tri tri-l"></i><svg class="launch" width="8" height="8"><path fill="none" stroke="#ddd" d="M1 1l5 5M7 2v5H2"/></svg></div>
 </div>
</section>

<nav class="files d-flex flex-shrink-0" aria-label="文件选项卡">
 <button class="flat ftab f-start">开始</button>
 <div class="ftab cur"><span>封闭式车库+大堂屋+...墅，主体预算38万*</span><button class="flat ms-2" aria-label="关闭"><svg width="10" height="10"><path stroke="#a5abb5" stroke-width="2" d="M1 1l8 8M9 1l-8 8"/></svg></button></div>
 <button class="flat ftab f-add" aria-label="新图形"><svg width="10" height="10"><path stroke="#b5bac2" stroke-width="2" d="M5 1v8M1 5h8"/></svg></button>
</nav>
<div class="strip flex-shrink-0"></div>

<div class="d-flex flex-grow-1 overflow-hidden">
<main class="stage position-relative flex-grow-1">
 <svg class="cad" role="img" aria-label="图形">
  <defs>
   <pattern id="minor" width="15.540" height="15.540" x="21.400" y="193.700" patternUnits="userSpaceOnUse"><path fill="none" stroke="#272e38" d="M0 .5H15.540M.5 0V15.540"/></pattern>
   <pattern id="major" width="77.700" height="77.750" x="20.900" y="193.200" patternUnits="userSpaceOnUse"><path fill="none" stroke="#2f3646" stroke-width="1.200" d="M0 .6H77.700M.6 0V77.750"/></pattern>
  </defs>
  <g transform="translate(0 -173)">
   <rect y="173" width="100%" height="100%" fill="url(#minor)"/><rect y="173" width="100%" height="100%" fill="url(#major)"/>

   <!-- notes sheet -->
   <g transform="translate(240 270) scale(.33333)"><path fill="none" stroke="#d0d2d3" stroke-width="4" d="M110 70H685V584H110z"/><path fill="#fff" d="M228 243h117v12H228zM228 270h69v12h-69zM300 273h9v9h-9zM228 297h33v9h-33zM261 300h15v-3h18v12h-33zM297 300h9v9h-9zM228 324h84v9h-84zM228 348h48v12h-48zM279 351h15v-3h15v12h-30zM312 348h18v12h-18zM333 348h21v3h6v-3h27v3h3v-3h27v12h-84zM420 348h30v12h-30zM453 348h30v12h-30zM486 348h24v12h-24z"/></g>

   <!-- second floor, furnished -->
   <g transform="translate(780 260) scale(.33333)">
    <use href="#f2"/>
    <path stroke="#ccc" stroke-width="3" d="M366 88V146M384 88V170M394 88V170M128 190V256M186 190V258"/>
    <path fill="#fff" d="M175 190h12v42h-12zM187 202h42v6h-42zM270 108h24v9h-24zM405 114h21v12h-21zM135 219h21v9h-21zM183 306h21v12h-21zM324 312h21v12h-21zM417 282h21v12h-21z"/><circle cx="209" cy="196" r="6" fill="#222930" stroke="#fff" stroke-width="3"/>
    <path fill="#222930" stroke="#ddd" stroke-width="4" d="M310 147H383V172H310zM347 147V172M314 151L343 168M343 151L314 168M351 151L379 168M379 151L351 168"/>
    <use href="#ward" x="432" y="188"/><use href="#ward" x="432" y="219"/><use href="#ward" x="89" y="267"/>
    <use href="#bed" x="87" y="297"/><use href="#bed" transform="translate(533 87) scale(-1 1)"/><use href="#bed" transform="translate(533 270) scale(-1 1)"/>
    <path fill="#4f8ea3" d="M143 186h21v10l-5 18h-10l-5-18z"/><path stroke="#fff" stroke-width="3" d="M104 189l5 5 5-5" fill="none"/>
    <g fill="none" stroke="#00f6f6" stroke-width="5"><circle cx="339" cy="115" r="13"/><path stroke-width="3" d="M324 103h8M347 103h7v8M324 118v8h8M346 129h8v-8"/><path stroke-width="4" d="M301 439h19v13H301zM306 452a12 12 0 1 1-16 0M332 452a12 12 0 1 1-16 2M282 474h24M316 474h24"/></g>
    <use href="#sofa" transform="translate(271 303) rotate(90)"/><use href="#arm" x="276" y="270"/><use href="#arm" x="276" y="362"/>
    <g fill="none" stroke="#4f8ea3" stroke-width="3"><path d="M283 316h18v31h-18zM287 321h10v21h-10zM254 282h20v18h-20zM254 366h20v18h-20z"/><circle cx="264" cy="291" r="5"/><circle cx="264" cy="375" r="5"/></g>
   </g>
   <text x="855" y="453">二层平面图</text>

   <!-- second floor, empty -->
   <g transform="translate(1168.400 272.300) scale(.33333)">
    <use href="#f2"/><path stroke="#fff" stroke-width="12" d="M388 82V173M240 403H270M354 403H388"/>
    <path fill="none" stroke="#ddd" stroke-width="3" d="M268 400V368A43 38 0 0 1 311 403A45 38 0 0 1 356 368V400M176 188V232M185 188V232"/>
   </g>
   <text x="1250" y="453">二层平面图</text>

   <!-- ground floor, furnished -->
   <g transform="translate(780 580) scale(.33333)">
    <use href="#f1"/>
    <path stroke="#ccc" stroke-width="3" d="M128 167V235"/><path fill="none" stroke="#fff" stroke-width="3" d="M104 167l5 5 5-5"/>
    <use href="#ward" x="89" y="244"/><use href="#ward" transform="translate(258 290) rotate(90) scale(.86 .95)"/><use href="#bed" x="87" y="278"/>
    <path fill="#4f8ea3" d="M450 63h30v19h-30zM441 165h41v19h-41zM139 208q9-8 17 0v27h-18zM186 220h18l4-12h24v27h-46z"/><path stroke="#222930" stroke-width="2" fill="none" d="M455 72h8M469 72h6M445 170h10v8h-10M462 170l14 10M143 214h9v12h-9zM212 221h18M192 226h8"/>
    <g fill="none" stroke="#00f6f6" stroke-width="4"><path d="M284 95H334V126H284zM290 95V80h18v15M311 95V80h16v15M290 126v17h16v-17M311 126v17h16v-17M284 102l-17 2v13l17 2M334 102l17 2v13l-17 2"/></g>
    <path fill="#fff" d="M294 99h21v11h-21zM420 108h21v12h-21zM576 135h21v12h-21zM147 174h21v12h-21zM423 243h21v12h-21zM291 282h21v12h-21zM186 303h21v12h-21z"/>
    <use href="#arm" transform="translate(389 330) rotate(-90)"/><use href="#arm" transform="translate(513 298) rotate(90)"/><use href="#sofa" transform="translate(480 361) rotate(180)"/>
    <g fill="none" stroke="#4f8ea3" stroke-width="3"><path d="M432 304h35v19h-35zM438 309h23v9h-23zM400 333h18v18h-18zM484 333h18v18h-18z"/><circle cx="409" cy="342" r="5"/><circle cx="493" cy="342" r="5"/></g>
    <g fill="none" stroke="#4f8ea3" stroke-width="4"><path d="M590 187h44l9 12v136l-8 14h-48l-8-14V199zM584 195v148M638 195v148M596 194h32l3 42q-19-5-38 0zM586 244q25-10 50 0l-6 18h-38zM590 264h42v24h-42zM600 264v24M611 264v24M622 264v24M586 294h50M586 300h50M592 306h40v16h-40zM590 330q20 8 42 0M612 300v22"/></g>
   </g>
   <text x="862" y="763">一层平面图</text>

   <!-- ground floor, empty -->
   <g transform="translate(1186.700 579.600) scale(.33333)"><use href="#f1"/></g>
   <text x="1272" y="763">一层平面图</text>
  </g>
 </svg>

 <svg class="ucs position-absolute bottom-0 start-0" width="100" height="100" aria-label="UCS"><path fill="none" stroke="#e8e8e8" stroke-width="1.300" d="M20.500 29v50H71M16.500 74.500h9v10h-9z"/><text x="22" y="25">Y</text><text x="75" y="78">X</text></svg>

 <div class="vp-label position-absolute">[−][俯视][二维线框]</div>
 <div class="mdi d-flex position-absolute">
  <button class="flat" aria-label="最小化"><svg width="11" height="12"><path fill="#fff" d="M0 7h10v3H0z"/></svg></button>
  <button class="flat" aria-label="还原"><svg width="11" height="12"><path fill="none" stroke="#fff" stroke-width="2" d="M4 1h6v7M1 4h6v6H1z"/></svg></button>
  <button class="flat" aria-label="关闭"><svg width="10" height="12"><path stroke="#fff" stroke-width="2.500" d="M1 2l8 8M9 2l-8 8"/></svg></button>
 </div>
 <svg class="cube position-absolute" width="132" height="146" viewBox="0 0 132 146" aria-label="ViewCube">
  <circle cx="66" cy="72" r="53.500" fill="none" stroke="#464950" stroke-width="13"/>
  <path fill="#a9abac" stroke="#8f9192" d="M40.500 46.500h51v51h-51z"/><path fill="#9aa3a9" d="M50 56h32v32H50z"/>
  <text x="66" y="24">北</text><text x="66" y="137">南</text><text x="9" y="80">西</text><text x="122" y="80">东</text><text class="top-t" x="66" y="83">上</text>
 </svg>
 <button class="flat wcs position-absolute">WCS<svg width="9" height="6"><path fill="#a5a4b0" stroke="#b3b3bc" d="M1 1h7L4.500 5z"/></svg></button>
 <div class="navbar-v position-absolute" role="toolbar" aria-label="导航栏"><svg width="32" height="212" fill="none" stroke="#3f434a" stroke-width="1.400">
  <circle cx="26" cy="5" r="4" fill="#44484d" stroke="none"/><path stroke="#777" stroke-width="1" d="M24 3l4 4M28 3l-4 4"/>
  <path d="M16 20h10v11a10.500 10.500 0 1 1-10-11z"/><circle cx="16" cy="30" r="5.500"/><path d="M12 34l-4 4M20 34l4 4"/>
  <path fill="#3f434a" stroke="none" d="M13 49h6l-3 3zM13 119h6l-3 3zM13 157h6l-3 3z"/><path stroke="#6c6f73" stroke-width="1" d="M3 56.500h26M3 164.500h26"/>
  <path d="M10 83l-6-8c1-3 4-1 6 1l-2-10c0-3 3-3 4 0l2 6v-9c1-3 3-3 4 0v9l3-8c2-2 4-1 3 2l-2 9 3-4c3-1 2 2 1 3l-3 8-4 3h-8z"/>
  <path d="M5 91l14 14M19 91L5 105M5 95v-4h4M15 91h4v4M5 101v4h4"/><circle cx="20" cy="104" r="5"/><path stroke-width="3" d="M24 107l4 4"/>
  <path d="M14 149v-16h-3l5-6 5 6h-3v16zM14 136c-12 0-12 6-6 8M18 136c11 1 11 6 4 8-4 1-10 0-14 0M11 141l-4 3 4 4"/>
  <path d="M5 170h5v5H5zM13 170h5v5h-5zM21 170h5v5h-5zM5 179h15v12H5z"/><path fill="#3f434a" d="M10 182l5 3-5 3z"/>
  <circle cx="26" cy="206" r="4" fill="#44484d" stroke="none"/><path stroke="#777" stroke-width="1" d="M24 205h4M24 207h4"/>
 </svg></div>

 <div class="cmdline d-flex position-absolute">
  <div class="cmdtools d-flex align-items-center flex-shrink-0">
   <svg width="5" height="17"><path stroke="#b9bbc0" stroke-width="2" stroke-dasharray="2 1" d="M1 0v17M4 0v17"/></svg>
   <button class="flat" aria-label="关闭"><svg width="10" height="10"><path stroke="#b9bbc0" stroke-width="2" d="M1 1l8 8M9 1l-8 8"/></svg></button>
   <button class="flat" aria-label="自定义"><svg width="15" height="15"><path fill="none" stroke="#b9bbc0" stroke-width="2.500" d="M1 14l8-8"/><path fill="#b9bbc0" d="M8 7c-1-4 1-6 4-7l-1 3 1 2 3-1c0 4-3 5-6 4z"/></svg></button>
  </div>
  <div class="cmdbox d-flex align-items-center flex-grow-1 gap-1">
   <svg width="16" height="13"><path fill="none" stroke="#555" d="M.5.500h15v12H.5z"/><path fill="#555" d="M0 0h16v3H0z"/><path fill="none" stroke="#555" d="M2 5l3 2-3 2M6 10h4"/></svg>
   <svg width="8" height="5"><path fill="#555" d="M0 0h8L4 5z"/></svg>
   <input class="flex-grow-1" type="text" placeholder="键入命令" aria-label="命令">
   <svg width="8" height="5"><path fill="#555" d="M0 5h8L4 0z"/></svg>
  </div>
 </div>
 <div class="wm position-absolute">6MO.CN</div>
</main>
<div class="edge flex-shrink-0"></div>
</div>
</body>
</html>
